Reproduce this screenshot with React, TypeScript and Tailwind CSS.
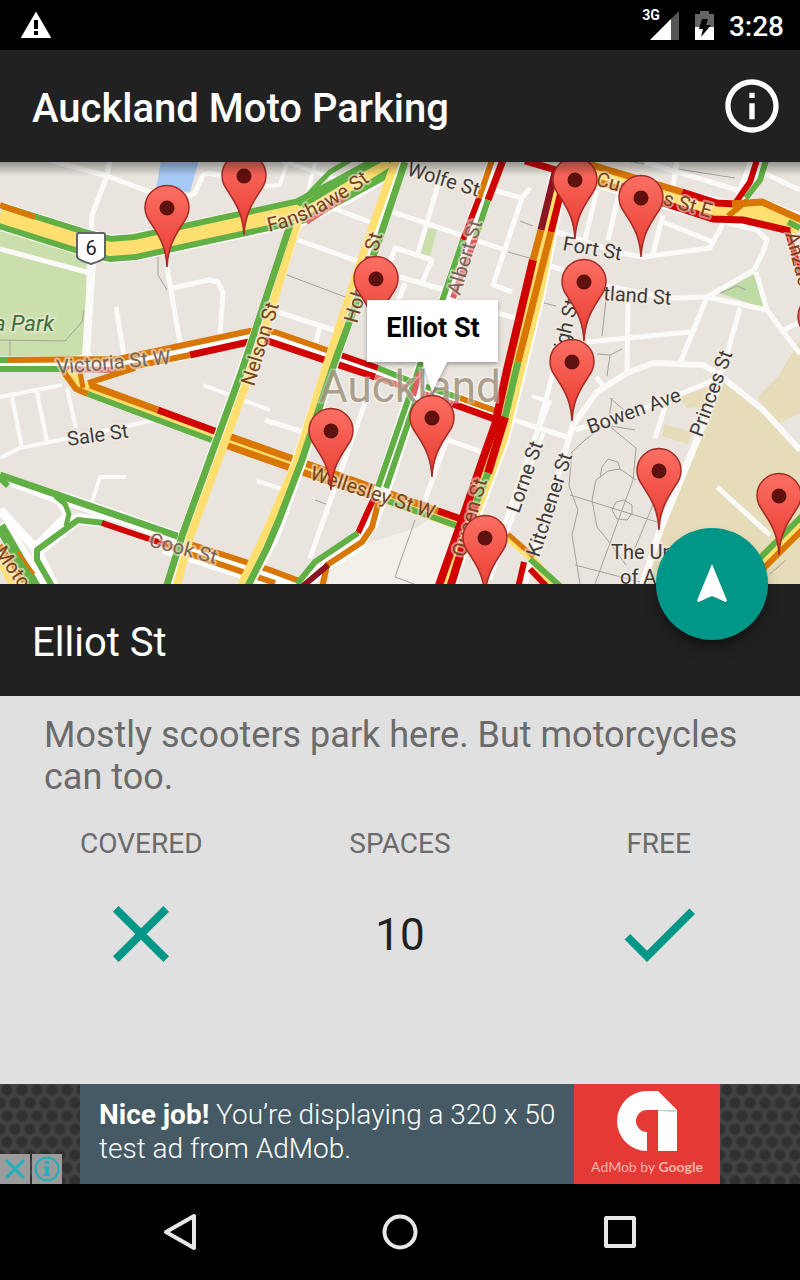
import { FC } from 'react'

const GREEN = '#62b045';
const ORANGE = '#d97706';
const RED = '#d00202';
const MAROON = '#8a1420';
const YELLOW = '#ffdf70';

type Line = [color: string, points: string, width?: number];

const parks: [string, string][] = [
    ['#cbdfac', '0,223 86,248 86,350 82,357 0,357'],
    ['#a6c8f5', '161,160 199,160 190,192 156,189'],
    ['#cbdfac', '428,228 437,230 430,256 420,253'],
    ['#bfdba5', '755,274 719,293 766,309'],
    ['#e6dcb9', '724,380 764,413 800,452 800,584 645,584 660,532 700,440'],
    ['#e6dcb9', '777,378 800,340 800,413 778,424 757,397'],
    ['#e6dcb9', '678,398 716,384 708,406 688,408'],
    ['#e6dcb9', '664,424 692,432 688,444 662,436'],
    ['#f3f0ea', '416,528 436,514 456,530 440,584 328,584 330,572 362,545'],
];

const streets: [string, number?][] = [
    ['50,160 107,176 150,192'],
    ['110,160 107,176 92,215 91,240'],
    ['92,262 86,356', 8],
    ['0,249 90,273', 5],
    ['78,358 92,356', 5],
    ['116,307 124,356', 5],
    ['167,267 180,343', 5],
    ['173,288 209,280 218,282 223,293 220,334'],
    ['188,197 195,193 203,175 208,173 224,176'],
    ['254,187 280,185 288,160', 4],
    ['280,160 345,182', 4],
    ['315,163 305,203', 4],
    ['332,208 373,223'],
    ['298,240 360,262'],
    ['393,212 505,250'],
    ['438,185 418,253'],
    ['388,268 395,248 432,260 422,283'],
    ['400,277 445,290'],
    ['493,190 522,198 530,188'],
    ['522,198 493,285 512,292'],
    ['278,312 340,332'],
    ['320,326 316,342'],
    ['405,283 394,312'],
    ['498,313 518,319'],
    ['0,397 62,385', 4],
    ['12,397 22,448', 4],
    ['37,392 47,442', 4],
    ['67,388 76,428', 4],
    ['0,458 20,448 80,436 155,420', 4],
    ['92,502 100,477 126,477', 4],
    ['203,385 270,410', 4],
    ['257,481 282,489', 4],
    ['265,420 303,432'],
    ['365,403 310,558'],
    ['448,440 482,452'],
    ['447,440 425,500'],
    ['508,418 570,438'],
    ['550,400 530,450 505,524'],
    ['553,373 537,432'],
    ['532,396 545,400', 4],
    ['597,190 585,240'],
    ['618,197 608,240'],
    ['550,230 570,236 620,253 643,257 710,248 723,223'],
    ['663,215 653,253'],
    ['663,222 713,242'],
    ['645,162 737,190'],
    ['762,172 800,190'],
    ['677,160 673,187'],
    ['723,222 757,230 767,240 763,252 754,270'],
    ['754,270 707,297 670,298 600,285'],
    ['756,272 767,310 800,354'],
    ['707,297 767,310'],
    ['707,297 680,363'],
    ['740,308 722,372'],
    ['587,342 690,332'],
    ['628,303 627,373'],
    ['547,265 570,272'],
    ['780,332 800,322'],
    ['525,583 573,425 597,392 627,373 653,363 703,365 722,376', 6],
    ['575,430 640,410 722,377', 5],
    ['722,377 697,440 660,530 643,584', 7],
    ['722,377 763,410 800,450', 6],
    ['596,377 604,387'],
    ['665,407 655,438'],
    ['717,487 770,535'],
    ['545,428 490,580', 4],
];

const paths = [
    '287,275 348,298', '415,520 395,577 430,590', '315,500 326,504', '10,357 10,340', '0,340 65,341 82,322 84,310',
    '158,250 158,275 167,290', '520,221 533,226', '508,252 533,259', '620,160 735,178', '540,302 556,306', '606,300 602,336',
    '597,354 610,355 622,349', '610,355 607,376', '720,293 737,286 746,290', '570,495 657,522', '635,430 605,425 585,440 572,452 569,486 578,510 572,535 580,584',
    '612,398 608,425 636,448 633,480 595,584', '610,398 624,410', '600,478 602,467 608,459 618,462 620,469 608,471 596,480 592,500 597,527 610,543 626,565',
    '620,469 636,480', '655,500 630,560', '575,565 640,582', '612,510 616,502 624,500 632,505 632,513 627,520 617,519 612,510', '786,560 770,574',
];

const roads: Line[] = [
    // motorway ramps
    ['#ffffff', '0,478 60,500 68,515 35,548 0,510', 9],
    ['#ffffff', '60,497 110,514 184,540', 12],
    ['#ffffff', '0,524 44,588', 16],
    ['#ffffff', '104,522 78,519 37,552 54,588', 11],
    ['#ffffff', '165,545 300,588', 18],
    [YELLOW, '0,556 16,586', 12],
    [ORANGE, '0,545 24,582', 5],
    [GREEN, '0,526 36,588', 11],
    [ORANGE, '18,552 34,574', 3],
    [GREEN, '0,478 8,486'],
    [GREEN, '55,496 65,504 69,514 66,526', 5],
    [GREEN, '104,523 78,520 37,550 37,560 52,586', 6],
    [GREEN, '0,475 183,538', 7],
    [RED, '102,523 167,545', 6],
    [ORANGE, '187,543 270,570 302,582', 6],
    [ORANGE, '167,545 187,553 275,583', 6],
    // Victoria St W
    ['#ffffff', '0,364 120,364 190,352 262,335 300,346 420,387 502,417', 15],
    [GREEN, '0,360 8,360', 6],
    [ORANGE, '8,360 118,359 170,348 250,331 275,332 335,353', 6],
    [GREEN, '0,369 66,369', 6],
    ['#dc6f6a', '66,369 116,370', 6],
    [ORANGE, '116,370 190,355', 6],
    [RED, '190,355 262,339 375,377', 7],
    [RED, '335,353 378,368', 6],
    [GREEN, '378,368 415,383 460,398', 6],
    [ORANGE, '460,398 502,413', 6],
    ['#dc6f6a', '375,377 453,404', 6],
    [RED, '453,404 500,421', 7],
    // Wellesley St W
    [YELLOW, '66,372 82,388 100,393 220,438 462,525', 12],
    [ORANGE, '63,371 76,389 88,394', 6],
    [ORANGE, '80,372 83,388', 5],
    [ORANGE, '88,383 135,368', 6],
    [ORANGE, '90,385 158,410', 7],
    [RED, '158,410 220,433', 7],
    [ORANGE, '220,433 310,465 438,511', 7],
    [RED, '438,511 464,520', 7],
    [GREEN, '88,394 217,442', 6],
    [ORANGE, '217,442 305,473 388,501', 7],
    [GREEN, '388,501 460,527', 6],
    // Fanshawe St
    ['#ffffff', '0,216 80,241 110,249 135,247 300,212 345,190 395,160', 28],
    [GREEN, '0,216 80,241 110,249 135,247 300,211 340,190 395,160', 26],
    [YELLOW, '0,216 80,241 110,249 135,247 300,211 340,190 388,160', 14],
    [ORANGE, '0,205 35,217', 6],
    [GREEN, '298,205 330,172 350,160', 5],
    [GREEN, '302,206 348,178 380,160', 5],
    ['#dc6f6a', '306,222 345,197', 6],
    // Nelson St
    ['#ffffff', '295,222 270,299 241,381 186,535 171,588', 15],
    [YELLOW, '299,218 273,303 245,387 190,537 176,588', 8],
    [GREEN, '291,222 267,295 240,376 183,533 166,588', 7],
    // Hobson St
    ['#ffffff', '400,160 329,370 299,462 273,534 244,588', 15],
    [YELLOW, '396,160 368,240 325,370 296,463 267,530 240,588', 8],
    [GREEN, '405,162 380,237 333,367 302,460 279,520 267,548 247,588', 7],
    // Albert St
    ['#ffffff', '497,160 448,298 412,400 383,488 370,522 355,545 318,567 302,588', 17],
    [ORANGE, '492,160 479,198', 6],
    [RED, '479,198 463,240', 6],
    [GREEN, '463,240 408,400 378,487', 6],
    [RED, '374,498 358,533', 6],
    [GREEN, '358,533 315,562 297,584', 6],
    [RED, '503,160 488,200', 7],
    [GREEN, '488,200 476,236', 6],
    ['#d95f62', '476,236 453,298', 6],
    ['#d95f62', '420,372 413,396', 6],
    [GREEN, '416,400 386,488', 6],
    [ORANGE, '379,500 372,527 362,542 327,565 322,588', 6],
    [MAROON, '328,565 303,586', 6],
    // Queen St
    ['#ffffff', '560,168 537,290 500,440 466,530 445,588', 19],
    [YELLOW, '560,168 537,290 500,440 466,530 445,588', 15],
    [MAROON, '556,168 541,230', 7],
    [ORANGE, '541,230 533,260', 7],
    [RED, '533,260 507,370 495,425 485,453 462,520 438,588', 8],
    [RED, '564,180 551,232', 7],
    [ORANGE, '551,232 518,362', 7],
    [GREEN, '518,362 505,417', 7],
    [RED, '505,417 488,473', 8],
    [GREEN, '488,473 476,503', 7],
    [RED, '476,503 450,588', 8],
    [YELLOW, '508,538 530,556 556,588', 8],
    [ORANGE, '508,534 534,557', 5],
    [GREEN, '530,559 560,586', 6],
    [RED, '524,562 518,588', 6],
    [RED, '530,569 548,588', 6],
    // Customs St E
    ['#ffffff', '757,160 740,204', 15],
    [RED, '757,160 750,182 736,202', 6],
    [GREEN, '766,160 760,180 746,198', 6],
    ['#ffffff', '560,164 682,202 735,213 765,212 800,226', 24],
    [YELLOW, '560,164 682,202 735,213 765,212 800,226', 20],
    [RED, '525,161 556,170', 7],
    [ORANGE, '570,160 595,166 682,192', 7],
    [RED, '682,192 717,203 736,204', 7],
    [ORANGE, '732,204 762,202 802,220', 7],
    [ORANGE, '728,216 748,200', 6],
    [ORANGE, '600,182 660,202', 6],
    [RED, '660,202 713,219 743,220 790,231', 7],
    [GREEN, '788,222 800,228', 6],
    [RED, '787,230 802,276', 6],
    // Symonds St
    [YELLOW, '750,574 802,524', 16],
    [GREEN, '750,568 802,516', 6],
    [ORANGE, '758,574 802,530', 6],
];

const ROAD_LABEL = '#76431a';
const STREET_LABEL = '#3c3c3c';
const FADED_LABEL = '#77655c';

// x and y are the start of the baseline
const labels: [text: string, x: number, y: number, angle: number, color: string][] = [
    ['Wolfe St', 406, 175, 17, STREET_LABEL],
    ['Fort St', 562, 250, 10, STREET_LABEL],
    ['tland St', 603, 300, 4, STREET_LABEL],
    ['High St', 564, 364, -77, STREET_LABEL],
    ['Bowen Ave', 590, 434, -20, STREET_LABEL],
    ['Princes St', 702, 438, -70, STREET_LABEL],
    ['Lorne St', 519, 514, -71, STREET_LABEL],
    ['Kitchener St', 539, 558, -72, STREET_LABEL],
    ['Sale St', 68, 446, -8, STREET_LABEL],
    ['Nelson St', 254, 387, -73, ROAD_LABEL],
    ['Hobson St', 357, 324, -74, ROAD_LABEL],
    ['Albert St', 460, 296, -73, FADED_LABEL],
    ['Queen St', 465, 558, -74, ROAD_LABEL],
    ['Wellesley St W', 309, 479, 18, ROAD_LABEL],
    ['Victoria St W', 57, 374, -5, FADED_LABEL],
    ['Cook St', 148, 546, 15, FADED_LABEL],
    ['Customs St E', 595, 185, 16, ROAD_LABEL],
    ['Anzac', 785, 234, 75, ROAD_LABEL],
    ['Moto', -6, 552, 55, ROAD_LABEL],
];

const pins = [
    [244, 235], [167, 267], [575, 239], [641, 257], [376, 338], [584, 341], [820, 376],
    [572, 421], [432, 477], [331, 490], [659, 530], [779, 555], [485, 597],
];

const ParkingMap: FC = () => (
    <svg
        viewBox="0 162 800 422"
        preserveAspectRatio="xMidYMid slice"
        className="block h-[422px] w-full bg-[#e9e5de] font-['Roboto',sans-serif]"
        role="img"
        aria-label="Map of motorcycle parking in Auckland"
    >
        <defs>
            <linearGradient id="pin" x1="0" y1="0" x2="0" y2="1">
                <stop offset="0" stopColor="#fb6f62" />
                <stop offset="1" stopColor="#e93a30" />
            </linearGradient>
            <linearGradient id="shade" x1="0" y1="0" x2="0" y2="1">
                <stop offset="0" stopColor="#000" stopOpacity="0.35" />
                <stop offset="1" stopColor="#000" stopOpacity="0" />
            </linearGradient>
            <filter id="lift" x="-20%" y="-20%" width="140%" height="150%">
                <feDropShadow dx="0" dy="2" stdDeviation="2" floodOpacity="0.35" />
            </filter>
            <path id="fanshawe" d="M269 232 Q 318 222 385 170" />
        </defs>
        {parks.map(([color, points]) => <polygon key={points} points={points} fill={color} />)}
        <g fill="none" stroke="#a5a199" strokeWidth="1">
            {paths.map((points) => <polyline key={points} points={points} />)}
        </g>
        <g fill="none" stroke="#fbfaf8" strokeLinejoin="round">
            {streets.map(([points, width = 5]) => <polyline key={points} points={points} strokeWidth={width} />)}
        </g>
        <g fill="none" strokeLinejoin="round">
            {roads.map(([color, points, width = 6], i) => (
                <polyline key={i} points={points} stroke={color} strokeWidth={width} />
            ))}
        </g>
        <path d="M79 233H103Q105 233 105 235V257Q104 260 91 264Q78 260 77 257V235Q77 233 79 233Z" fill="#fff" stroke="#5f6368" strokeWidth="2" strokeLinejoin="round" />
        <text x="91" y="255" fontSize="20" textAnchor="middle" fill="#222">6</text>
        <g fontSize="20" stroke="#f7ece0" strokeOpacity="0.55" strokeWidth="4" strokeLinejoin="round" paintOrder="stroke">
            {labels.map(([text, x, y, angle, color]) => (
                <text key={text} x={x} y={y} fill={color} transform={`rotate(${angle} ${x} ${y})`}>{text}</text>
            ))}
            <text fill={ROAD_LABEL}><textPath href="#fanshawe">Fanshawe St</textPath></text>
            <text x="-6" y="331" fontSize="22" fontStyle="italic" fill="#38713f">a Park</text>
            <text x="611" y="559" fill={STREET_LABEL}>The University</text>
            <text x="620" y="584" fill={STREET_LABEL}>of Auckland</text>
        </g>
        <text x="319" y="402" fontSize="44" fill="#a0917c" fillOpacity="0.85" stroke="#fff" strokeOpacity="0.4" strokeWidth="3" paintOrder="stroke">Auckland</text>
        {pins.map(([x, y]) => (
            <g key={`${x}-${y}`} transform={`translate(${x} ${y})`}>
                <path
                    d="M0 0C-1 -18 -6 -28 -13 -39C-18 -47 -22 -51 -22 -59.500A22 22 0 0 1 22 -59.500C22 -51 18 -47 13 -39C6 -28 1 -18 0 0Z"
                    fill="url(#pin)"
                    stroke="#a52b27"
                    strokeWidth="1.500"
                />
                <circle cy="-59" r="7.500" fill="#5e110f" />
            </g>
        ))}
        <path d="M367 300H498V362H447L432 392L423 362H367Z" fill="#fff" filter="url(#lift)" />
        <text x="433" y="337" fontSize="27" fontWeight="700" textAnchor="middle" fill="#000">Elliot St</text>
        <rect x="0" y="162" width="800" height="14" fill="url(#shade)" />
    </svg>
);

const StatusBar: FC = () => (
    <div className="flex h-[50px] items-center justify-between bg-black pl-5 pr-4">
        <svg viewBox="0 0 32 28" className="h-7 w-8" fill="#fff">
            <path fillRule="evenodd" d="M16 0.500L31 26.500Q31 27 30 27H2Q1 27 1 26.500ZM14 9V18H18V9ZM14 20V24H18V20Z" />
        </svg>
        <div className="flex items-center">
            <span className="-mr-2.5 self-start text-sm/4 font-bold text-white">3G</span>
            <svg viewBox="0 0 29 29" className="mr-4 h-[29px] w-[29px]">
                <path d="M0 29L29 0V29Z" fill="#555" />
                <path d="M0 29L21 8V29Z" fill="#fff" />
            </svg>
            <svg viewBox="0 0 20 29" className="mr-3.5 h-[29px] w-5">
                <path d="M5 0H14V3H19V16H0V3H5Z" fill="#666" />
                <path d="M0 16H19V29H0Z" fill="#fff" />
                <path d="M7 8H13L11 14H16L6 26L8 18H4Z" fill="#000" />
            </svg>
            <span className="pt-1 text-[28px]/8 font-medium text-white">3:28</span>
        </div>
    </div>
);

const AdBanner: FC = () => (
    <div className="relative flex h-[100px] justify-center bg-[#424242] bg-[radial-gradient(circle_at_7px_6px,#303030_4px,transparent_7px),radial-gradient(circle_at_0px_19px,#303030_4px,transparent_7px),radial-gradient(circle_at_15px_19px,#303030_4px,transparent_7px)] bg-[size:15px_26px]">
        <a href="#admob" className="flex w-full max-w-[640px]">
            <p className="flex-1 bg-[#455a64] pl-[19px] pt-[14px] text-[28px]/[34px] font-light text-white">
                <b className="font-bold">Nice job!</b> You’re displaying a 320 x 50 <br />test ad from AdMob.
            </p>
            <div className="flex w-[146px] flex-col items-center bg-[#e53935] pt-[7px]">
                <svg viewBox="0 0 60 60" className="h-[60px] w-[60px]">
                    <path d="M30 0H41L60 19V60H41V19H30A11 11 0 0 0 30 41V60A30 30 0 0 1 30 0Z" fill="#fff" />
                    <path d="M41 19H60L58 21L41 20Z" fill="#ccc" />
                </svg>
                <span className="mt-1.5 font-['Lato',sans-serif] text-sm/5 text-[#fbb4ae]">AdMob by <b className="font-bold">Google</b></span>
            </div>
        </a>
        <div className="absolute bottom-0 left-0 flex gap-0.5">
            <button aria-label="Close ad" className="flex h-[30px] w-[30px] items-center justify-center bg-[#9b9b9b]">
                <svg viewBox="0 0 30 30" className="h-[30px] w-[30px]" stroke="#1eb0bf" strokeWidth="3"><path d="M6 6L24 24M24 6L6 24" /></svg>
            </button>
            <button aria-label="Ad info" className="flex h-[30px] w-[30px] items-center justify-center bg-[#9b9b9b]">
                <svg viewBox="0 0 30 30" className="h-[30px] w-[30px]" fill="none" stroke="#1eb0bf" strokeWidth="2">
                    <circle cx="15" cy="15" r="11.500" />
                    <path d="M15 7V10M15 12.500V22" strokeWidth="4" />
                    <path d="M12 13.500H15M12 21H18" />
                </svg>
            </button>
        </div>
    </div>
);

const App: FC = () => {
    return (
        <div className="flex min-h-screen flex-col bg-black font-['Roboto',sans-serif]">
            <StatusBar />
            <header className="flex h-28 items-center justify-between bg-[#212121] pl-8 pr-4">
                <h1 className="pt-1.5 text-[40px]/[48px] font-medium text-white">Auckland Moto Parking</h1>
                <button aria-label="About">
                    <svg viewBox="0 0 24 24" className="h-16 w-16" fill="#fff">
                        <path d="M11 17h2v-6h-2v6zm1-15C6.480 2 2 6.480 2 12s4.480 10 10 10 10-4.480 10-10S17.520 2 12 2zm0 18c-4.410 0-8-3.590-8-8s3.590-8 8-8 8 3.590 8 8-3.590 8-8 8zM11 9h2V7h-2v2z" />
                    </svg>
                </button>
            </header>
            <ParkingMap />
            <div className="relative flex h-28 items-center bg-[#212121] pl-8">
                <h2 className="pt-1.5 text-[40px]/[48px] text-white">Elliot St</h2>
                <button aria-label="Navigate" className="absolute -top-14 right-8 flex h-28 w-28 items-center justify-center rounded-full bg-[#009688] shadow-lg shadow-black/40">
                    <svg viewBox="0 0 24 24" className="h-12 w-12" fill="#fff">
                        <path d="M12 2L4.500 20.290l.71.710L12 18l6.790 3 .71-.710z" />
                    </svg>
                </button>
            </div>
            <main className="grow basis-[388px] bg-[#e0e0e0] pt-[18px]">
                <p className="px-11 text-4xl/[42px] text-[#6b6b6b]">Mostly scooters park here. But motorcycles can too.</p>
                <dl className="mt-7 grid grid-cols-3 px-3 text-center">
                    <div className="flex flex-col items-center gap-6">
                        <dt className="text-[28px]/9 text-[#6b6b6b]">COVERED</dt>
                        <dd>
                            <svg viewBox="0 0 24 24" className="h-24 w-24" fill="#009688" role="img" aria-label="No">
                                <path d="M19 6.410L17.590 5 12 10.590 6.410 5 5 6.410 10.590 12 5 17.590 6.410 19 12 13.410 17.590 19 19 17.590 13.410 12z" />
                            </svg>
                        </dd>
                    </div>
                    <div className="flex flex-col items-center gap-6">
                        <dt className="text-[28px]/9 text-[#6b6b6b]">SPACES</dt>
                        <dd className="text-[44px]/[98px] text-[#212121]">10</dd>
                    </div>
                    <div className="flex flex-col items-center gap-6">
                        <dt className="text-[28px]/9 text-[#6b6b6b]">FREE</dt>
                        <dd>
                            <svg viewBox="0 0 24 24" className="h-24 w-24" fill="#009688" role="img" aria-label="Yes">
                                <path d="M9 16.200L4.800 12l-1.400 1.400L9 19 21 7l-1.400-1.400L9 16.200z" />
                            </svg>
                        </dd>
                    </div>
                </dl>
            </main>
            <AdBanner />
            <nav className="flex h-24 items-center justify-center gap-[180px] bg-black">
                <button aria-label="Back">
                    <svg viewBox="0 0 40 40" className="h-10 w-10" fill="none" stroke="#e8e8e8" strokeWidth="4" strokeLinejoin="round"><path d="M34 4V36L6 20Z" /></svg>
                </button>
                <button aria-label="Home">
                    <svg viewBox="0 0 40 40" className="h-10 w-10" fill="none" stroke="#e8e8e8" strokeWidth="4"><circle cx="20" cy="20" r="15.500" /></svg>
                </button>
                <button aria-label="Overview">
                    <svg viewBox="0 0 40 40" className="h-10 w-10" fill="none" stroke="#e8e8e8" strokeWidth="4" strokeLinejoin="round"><path d="M6 6H34V34H6Z" /></svg>
                </button>
            </nav>
        </div>
    )
}

export default App
